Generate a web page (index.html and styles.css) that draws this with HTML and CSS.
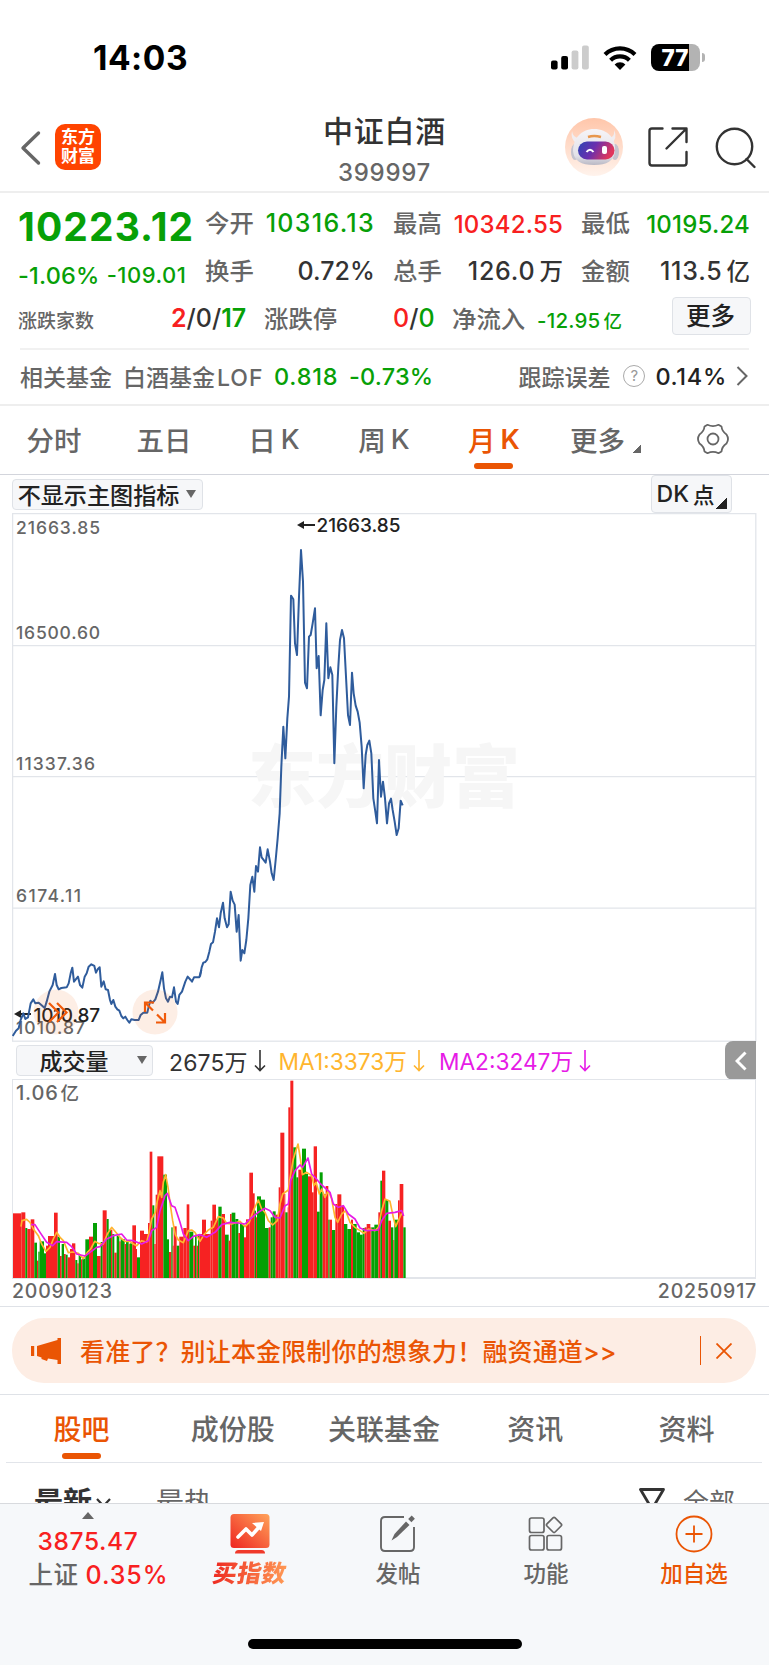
FILE: index.html
```
<!DOCTYPE html>
<html lang="zh-CN">
<head>
    <meta charset="UTF-8">
    <meta name="viewport" content="width=device-width, initial-scale=1.0">
    <title>中证白酒 399997</title>
    <link rel="stylesheet" href="styles.css">
</head>
<body>
    <div class="status-bar">
        <span class="time">14:03</span>
        <div class="status-icons">
            <svg class="signal" width="38" height="25" viewBox="0 0 38 25">
                <rect x="0" y="15.5" width="6.6" height="9" rx="2"/>
                <rect x="10.2" y="11" width="6.8" height="13.5" rx="2"/>
                <rect x="20.6" y="5.5" width="6.8" height="19" rx="2" fill="#ccc"/>
                <rect x="31" y="0.5" width="6.8" height="24" rx="2" fill="#ccc"/>
            </svg>
            <svg class="wifi" width="34" height="26" viewBox="0 0 34 26">
                <g fill="none" stroke="#000" stroke-width="4.2">
                    <path d="M2 9.5A21.5 21.5 0 0 1 32 9.5"/>
                    <path d="M7.6 15.2A13.4 13.4 0 0 1 26.4 15.2"/>
                </g>
                <path d="M17 25L11.6 19.4A7.6 7.6 0 0 1 22.4 19.4Z"/>
            </svg>
            <div class="battery"><span>77</span></div>
            <i class="battery-tip"></i>
        </div>
    </div>

    <header class="header">
        <div class="header-left">
            <svg width="22" height="36" viewBox="0 0 22 36" fill="none" stroke="#666" stroke-width="3.4" stroke-linecap="round"><path d="M18.5 3L3 18L18.5 33" stroke-linejoin="round"/></svg>
            <div class="logo"><span>东方</span><span>财富</span></div>
        </div>
        <div class="header-title">
            <h1>中证白酒</h1>
            <p>399997</p>
        </div>
        <div class="header-right">
            <svg width="58" height="58" viewBox="0 0 58 58">
                <defs>
                    <linearGradient id="halo" x1="0" y1="0" x2="0" y2="1"><stop offset="0" stop-color="#ffc6aa"/><stop offset="1" stop-color="#fff3ec"/></linearGradient>
                    <linearGradient id="face" x1="0" y1="0" x2="1" y2="0.3"><stop offset="0" stop-color="#2b46b5"/><stop offset="0.5" stop-color="#6a2fae"/><stop offset="1" stop-color="#e0365c"/></linearGradient>
                    <linearGradient id="shell" x1="0" y1="0" x2="0" y2="1"><stop offset="0" stop-color="#f6f4f7"/><stop offset="0.75" stop-color="#e2e1e8"/><stop offset="1" stop-color="#b9b8c4"/></linearGradient>
                </defs>
                <circle cx="29" cy="29" r="29" fill="url(#halo)"/>
                <path d="M7 13Q8 20 14 20L12 26Q5 21 7 13ZM49 12Q50 20 43 20L46 26Q53 20 49 12Z" fill="#f1edf0"/>
                <ellipse cx="10" cy="34" rx="4" ry="8" fill="#c5c3ce"/>
                <ellipse cx="50" cy="34" rx="4" ry="8" fill="#c5c3ce"/>
                <path d="M29 11C43 11 51 21 50 33C49 43 42 47 29 47C16 47 9 43 8 33C8 21 16 11 29 11Z" fill="url(#shell)"/>
                <rect x="13" y="23.5" width="36.5" height="18" rx="9" fill="url(#face)"/>
                <path d="M23 19Q29 17 36 19" stroke="#e8974d" stroke-width="2.4" fill="none"/>
                <path d="M21.5 34Q25 29.5 28.5 34" stroke="#fff" stroke-width="2" fill="none"/>
                <rect x="37" y="28" width="5" height="8" rx="2" fill="#fff"/>
            </svg>
            <svg class="share" width="40" height="40" viewBox="0 0 40 40" fill="none" stroke="#333" stroke-width="2.4" stroke-linecap="round" stroke-linejoin="round">
                <path d="M14.5 1.5H4Q1.5 1.5 1.5 4V36Q1.5 38.5 4 38.5H36Q38.5 38.5 38.5 36V25"/>
                <path d="M24.5 1.5H38.5V15M38 2L18.5 21.5"/>
            </svg>
            <svg class="search" width="42" height="42" viewBox="0 0 42 42" fill="none" stroke="#333" stroke-width="2.4" stroke-linecap="round">
                <circle cx="19.5" cy="19.5" r="17.7"/><path d="M31.5 32L39.5 40"/>
            </svg>
        </div>
    </header>

    <section class="quote">
        <div class="quote-main">
            <div class="price-block">
                <div class="price down">10223.12</div>
                <div class="change down"><span>-1.06%</span><span class="change-value">-109.01</span></div>
            </div>
            <dl class="quote-grid">
                <div><dt>今开</dt><dd class="down open">10316.13</dd></div>
                <div><dt>最高</dt><dd class="up sm">10342.55</dd></div>
                <div><dt>最低</dt><dd class="down sm">10195.24</dd></div>
                <div><dt>换手</dt><dd>0.72%</dd></div>
                <div><dt>总手</dt><dd class="wide">126.0<small>万</small></dd></div>
                <div><dt>金额</dt><dd class="wide">113.5<small>亿</small></dd></div>
            </dl>
        </div>
        <div class="quote-extra">
            <span class="label-sm">涨跌家数</span>
            <span class="counts"><b class="up">2</b>/0/<b class="down">17</b></span>
            <span class="label limit">涨跌停</span>
            <span class="limit-value"><b class="up">0</b>/<b class="down">0</b></span>
            <span class="label inflow">净流入</span>
            <span class="inflow-value down">-12.95<small>亿</small></span>
            <button class="more-btn">更多</button>
        </div>
        <div class="fund-row">
            <span class="fund-label">相关基金</span>
            <span class="fund-name">白酒基金<em>LOF</em></span>
            <span class="fund-price down">0.818</span>
            <span class="fund-change down">-0.73%</span>
            <span class="track">跟踪误差</span>
            <span class="help">?</span>
            <span class="track-value">0.14%</span>
            <svg width="12" height="20" viewBox="0 0 12 20" fill="none" stroke="#666" stroke-width="2"><path d="M1.5 1L10.5 10L1.5 19"/></svg>
        </div>
    </section>

    <nav class="period-tabs">
        <a>分时</a>
        <a>五日</a>
        <a>日<i>K</i></a>
        <a>周<i>K</i></a>
        <a class="active">月<i>K</i></a>
        <a class="more-tab">更多<span class="corner"></span></a>
        <a>
            <svg width="32" height="32" viewBox="0 0 32 32" fill="none" stroke="#666" stroke-width="1.8" stroke-linejoin="round">
                <path d="M10.500 1.800Q16 4.500 21.500 1.800L24.500 3.500Q25 8.500 29.500 11.500Q32.500 16 29.500 20.500Q25 23.500 24.500 28.500L21.500 30.200Q16 27.500 10.500 30.200L7.500 28.500Q7 23.500 2.500 20.500Q-0.500 16 2.500 11.500Q7 8.500 7.500 3.500Z"/>
                <circle cx="16" cy="16" r="5.5"/>
            </svg>
        </a>
    </nav>

    <div class="chart-toolbar">
        <button class="indicator">不显示主图指标<i class="caret"></i></button>
        <button class="dk">DK<span>点</span><i class="corner-dark"></i></button>
    </div>

    <svg class="price-chart" width="745" height="529" viewBox="12 513 745 529">
        <g stroke="#e2e5ea" stroke-width="1.3" fill="none">
            <rect x="12.6" y="513.6" width="743.2" height="527.6"/>
            <path d="M12 645.7H756M12 776.7H756M12 908.2H756"/>
        </g>
        <text class="watermark" x="248" y="802" textLength="272">东方财富</text>
        <g class="axis">
            <text x="16" y="534" textLength="84">21663.85</text>
            <text x="16" y="638.5" textLength="84">16500.60</text>
            <text x="16" y="770" textLength="79">11337.36</text>
            <text x="16" y="902" textLength="65">6174.11</text>
            <text x="16" y="1034" textLength="69">1010.87</text>
        </g>
        <g class="mark">
            <text x="316.5" y="532" textLength="84">21663.85</text>
            <text x="33.5" y="1021.5" textLength="66.5">1010.87</text>
            <path d="M302 525H315M18 1014H31" stroke="#222" stroke-width="1.8"/>
            <path d="M297 525L304 521V529ZM14 1014L21 1010V1018Z" fill="#222"/>
        </g>
        <g transform="scale(0.33333)" fill="none" stroke="#2f5c9c" stroke-width="6" stroke-linejoin="round">
            <polyline transform="translate(0 2700)" points="38,408 48,392 56,385 62,360 70,340 76,357 84,352 92,310 100,298 106,310 116,308 124,315 134,324 140,305 148,275 158,255 165,222 170,255 176,268 184,264 200,262 206,250 212,220 217,203 222,245 234,230 240,255 247,263 254,230 260,220 266,200 274,193 283,198 288,218 293,208 299,202 304,260 311,244 317,268 324,270 330,300 334,312 340,300 346,320 352,328 358,332 364,348 370,355 376,350 382,360 388,368 394,358 404,360 416,360 422,345 430,338 442,338 446,320 451,302 458,308 466,298 474,275 482,240 487,217 492,265 498,295 504,305 510,290 516,292 522,262 528,305 533,312 538,285 546,275 556,245 563,230 572,240 576,245 582,232 598,232 604,210"/>
            <polyline transform="translate(600 1590)" points="0,1340 5,1312 10,1298 16,1296 22,1288 28,1265 33,1242 39,1237 45,1205 51,1165 57,1192 62,1150 69,1118 74,1165 81,1192 86,1183 92,1085 98,1112 104,1124 110,1205 116,1155 122,1292 127,1260 133,1270 139,1230 145,1165 151,1065 157,1040 163,1085 168,1008 174,1025 180,952 185,982 197,998 203,958 210,995 215,1030 221,1050 227,990 233,925 239,850 244,710 250,590 256,685 262,565 267,500 273,197 280,208 285,340 291,375 297,200 303,60 309,155 315,458 321,475 327,320 332,315 338,280 345,235 350,415 356,378 362,556 368,480 373,450 379,280 385,445 391,412 397,435 403,700 409,530 415,410 420,330 426,300 432,325 438,440 444,555 450,585 456,428 461,490 467,527 473,545 479,578 485,650 491,775 497,675 502,645 508,632 514,670 520,805 526,845 531,880 537,690 543,800 549,755 555,805 561,880 567,820 573,806 578,840 584,875 590,915 596,895 602,812 608,826"/>
        </g>
        <g fill="#ea5504" fill-opacity="0.1">
            <circle cx="56" cy="1012" r="22.5"/>
            <circle cx="155" cy="1012" r="22.5"/>
        </g>
        <g fill="none" stroke="#f05a0a" stroke-width="2.2">
            <path d="M49 1003L58.500 1012.500L49 1022M57 1003L66.500 1012.500L57 1022"/>
            <path d="M145 1012V1002.500H154M145 1002.500L153 1010.500M165 1013V1022.500H156M165 1022.500L157 1014.500"/>
        </g>
    </svg>

    <div class="volume-header">
        <button class="volume-select"><span>成交量</span><i class="caret"></i></button>
        <span class="vol">2675万</span>
        <svg class="arrow" width="12" height="24" viewBox="0 0 12 24"><path d="M6 1V21M1 16.500L6 21.500L11 16.500"/></svg>
        <span class="ma1">MA1:3373万</span>
        <svg class="arrow ma1-arrow" width="12" height="24" viewBox="0 0 12 24"><path d="M6 1V21M1 16.500L6 21.500L11 16.500"/></svg>
        <span class="ma2">MA2:3247万</span>
        <svg class="arrow ma2-arrow" width="12" height="24" viewBox="0 0 12 24"><path d="M6 1V21M1 16.500L6 21.500L11 16.500"/></svg>
        <div class="collapse">
            <svg width="12" height="20" viewBox="0 0 12 20" fill="none" stroke="#fff" stroke-width="3"><path d="M10.500 1.500L2 10L10.500 18.500"/></svg>
        </div>
    </div>

    <div class="volume-chart">
        <svg width="744" height="198" viewBox="39 148 2232 594">
            <g id="bars"></g>
            <polyline fill="none" stroke="#ffb52e" stroke-width="5" stroke-linejoin="round" points="63,588 66,570 80,566 90,575 100,595 115,615 125,640 138,662 150,650 160,625 170,605 180,620 190,630 205,666 220,664 235,668 250,684 262,665 272,655 284,632 295,638 310,640 322,610 335,590 350,608 362,622 375,632 390,632 400,640 410,645 425,630 440,635 447,605 455,565 466,545 472,510 480,480 485,500 490,455 497,432 504,470 512,530 518,570 526,612 535,628 550,636 565,600 575,598 585,605 600,632 612,612 625,598 640,590 655,558 670,562 680,578 695,580 720,572 735,588 748,575 760,540 775,508 785,535 795,545 805,570 818,583 832,570 840,520 848,490 865,478 872,430 880,385 894,340 902,390 907,432 920,425 935,435 942,465 948,455 958,490 965,475 975,500 985,480 995,505 1005,560 1013,575 1025,550 1037,540 1050,575 1065,590 1080,600 1092,608 1105,595 1125,600 1135,590 1145,540 1155,505 1170,512 1180,560 1187,588 1195,570 1205,548"/>
            <polyline fill="none" stroke="#e61be6" stroke-width="5" stroke-linejoin="round" points="93,582 105,582 120,605 140,635 158,645 170,633 200,635 215,648 230,670 255,676 270,665 290,650 300,648 320,625 340,615 365,610 380,628 400,630 425,640 445,630 455,600 470,590 480,540 495,495 502,488 515,525 525,530 540,575 550,610 565,630 580,617 600,612 620,620 645,605 665,582 690,575 715,577 735,580 750,565 775,545 795,533 810,540 825,560 840,562 855,525 865,520 872,450 885,420 900,403 908,410 924,382 935,430 945,440 960,458 990,485 1000,520 1015,530 1030,525 1045,550 1065,565 1080,592 1100,600 1135,598 1145,570 1160,548 1185,545 1205,540 1211,556"/>
        </svg>
        <span class="volume-max">1.06<small>亿</small></span>
    </div>
    <div class="dates"><span>20090123</span><span>20250917</span></div>

    <div class="banner">
        <svg width="31" height="26" viewBox="0 0 31 26" fill="#ea5504"><path d="M0 8H3.200V18H0ZM6 8L26.500 2V0H30V26H26.500V22L17 20.500L16 23L10.500 21V19.500L6 18Z"/></svg>
        <p>看准了？别让本金限制你的想象力！融资通道&gt;&gt;</p>
        <i class="banner-line"></i>
        <svg width="16" height="16" viewBox="0 0 16 16" stroke="#ea5504" stroke-width="1.8"><path d="M0.500 0.500L15.500 15.500M15.500 0.500L0.500 15.500"/></svg>
    </div>

    <nav class="section-tabs">
        <a class="active">股吧</a>
        <a>成份股</a>
        <a>关联基金</a>
        <a>资讯</a>
        <a>资料</a>
    </nav>

    <div class="sort-row">
        <b>最新</b>
        <svg width="15" height="10" viewBox="0 0 15 10" fill="none" stroke="#333" stroke-width="2.2"><path d="M1 1L7.500 8L14 1"/></svg>
        <span class="hot">最热</span>
        <svg class="filter" width="26" height="28" viewBox="0 0 26 28" fill="none" stroke="#333" stroke-width="2.8" stroke-linejoin="round"><path d="M1.500 1.500H24.500L16 16V26H10V16Z"/></svg>
        <span class="all">全部</span>
    </div>

    <footer class="footer">
        <div class="footer-items">
            <div class="index-cell">
                <i class="tri-up"></i>
                <div class="index-price up">3875.47</div>
                <div class="index-name">上证 <span class="up">0.35%</span></div>
            </div>
            <div class="footer-item buy">
                <svg width="40" height="40" viewBox="0 0 40 40">
                    <defs><linearGradient id="buy" x1="0" y1="1" x2="1" y2="0"><stop offset="0" stop-color="#ee2420"/><stop offset="1" stop-color="#ffa35a"/></linearGradient></defs>
                    <rect x="0.5" y="0" width="39" height="34" rx="3.5" fill="url(#buy)"/>
                    <path d="M8.500 36H31.500Q35 36 35 39.500H5Q5 36 8.500 36Z" fill="#f0392a"/>
                    <path d="M8 23L16 15L22 21L30 12" fill="none" stroke="#fff" stroke-width="3.6" stroke-linecap="round" stroke-linejoin="round"/>
                    <path d="M22 9L34 8L31 17Z" fill="#fff"/>
                </svg>
                <span>买指数</span>
            </div>
            <div class="footer-item">
                <svg width="38" height="40" viewBox="0 0 38 40" fill="none" stroke="#666" stroke-width="1.9">
                    <path d="M25 3H6Q2 3 2 7V33Q2 37 6 37H31Q35 37 35 33V13"/>
                    <path d="M30.800 6.700L34.300 3.200" stroke-width="4.500"/>
                    <path d="M27 7.500L30.500 11L18 23L12.500 26.500L15.500 20Z" fill="#666" stroke="none"/>
                </svg>
                <span>发帖</span>
            </div>
            <div class="footer-item">
                <svg width="36" height="40" viewBox="0 0 36 40" fill="none" stroke="#666" stroke-width="1.7">
                    <rect x="1.5" y="4" width="14.5" height="14.5" rx="2"/>
                    <rect x="1.5" y="21.5" width="14.5" height="14.5" rx="2"/>
                    <rect x="19" y="21.5" width="14.5" height="14.5" rx="2"/>
                    <rect x="20.3" y="5.2" width="11.5" height="11.5" rx="1.5" transform="rotate(45 26.050 10.950)"/>
                </svg>
                <span>功能</span>
            </div>
            <div class="footer-item add">
                <svg width="38" height="40" viewBox="0 0 38 40" fill="none" stroke="#ea5504" stroke-width="1.8">
                    <circle cx="19" cy="20" r="17.5"/><path d="M10.500 20H27.500M19 11.500V28.500"/>
                </svg>
                <span>加自选</span>
            </div>
        </div>
        <div class="home-indicator"></div>
    </footer>

    <script src="chart.js"></script>
</body>
</html>
```
FILE: styles.css
```
* {
    box-sizing: border-box;
}

body {
    margin: 0;
    height: 1665px;
    overflow: hidden;
    display: flex;
    flex-direction: column;
    background: #fff;
    color: #333;
    font-family: Inter, "Noto Sans CJK SC", sans-serif;
    font-weight: 500;
}

h1, p, dl, dd {
    margin: 0;
}

i, em {
    font-style: normal;
}

button {
    font-family: inherit;
    font-weight: 500;
    color: #222;
    background: #f6f7f9;
    border: 1.5px solid #dfe2e7;
    border-radius: 4px;
    padding: 0;
    display: flex;
    align-items: center;
    justify-content: center;
    white-space: nowrap;
}

svg {
    flex: none;
    display: block;
}

.up {
    color: #f82020;
}

.down {
    color: #07a007;
}

/* status bar */
.status-bar {
    height: 115px;
    padding: 0 64px 0 93px;
    display: flex;
    align-items: center;
    justify-content: space-between;
    color: #000;
}

.time {
    font-size: 33.5px;
    font-weight: 700;
    line-height: 40px;
    letter-spacing: 0.5px;
}

.status-icons {
    display: flex;
    align-items: center;
}

.wifi {
    margin-left: 14px;
}

.battery {
    width: 49px;
    height: 27px;
    margin-left: 14px;
    border-radius: 8px;
    background: linear-gradient(90deg, #000 38px, #b3b3b3 38px);
    color: #fff;
    font-size: 22.5px;
    font-weight: 800;
    line-height: 27px;
    text-align: center;
    padding-right: 1px;
}

.battery-tip {
    width: 3px;
    height: 9px;
    margin-left: 2px;
    border-radius: 0 3px 3px 0;
    background: #b3b3b3;
}

/* header */
.header {
    height: 78px;
    border-bottom: 2px solid #eee;
    display: grid;
    grid-template-columns: 1fr 200px 1fr;
}

.header-left {
    display: flex;
    padding: 9px 0 0 20px;
    gap: 13px;
}

.header-left > svg {
    margin-top: 6px;
}

.logo {
    width: 46px;
    height: 46px;
    border-radius: 10px;
    background: #ff4400;
    color: #fff;
    font-size: 17px;
    font-weight: 700;
    line-height: 19px;
    padding-top: 4px;
    display: flex;
    flex-direction: column;
    align-items: center;
}

.header-title {
    text-align: center;
}

.header-title h1 {
    font-size: 30px;
    font-weight: 500;
    line-height: 36px;
    letter-spacing: 0.8px;
    margin-top: -2px;
}

.header-title p {
    font-size: 24px;
    line-height: 28px;
    margin-top: 10px;
    letter-spacing: 0.7px;
    color: #666;
}

.header-right {
    display: flex;
    justify-content: flex-end;
    padding: 3px 12px 0 0;
}

.share {
    margin: 9px 0 0 25px;
}

.search {
    margin: 9px 0 0 27px;
}

/* quote */
.quote-main {
    display: flex;
    padding: 6px 20px 0 18px;
    height: 102px;
}

.price-block {
    width: 188px;
}

.price {
    font-size: 39px;
    font-weight: 700;
    line-height: 46px;
    margin-top: 5px;
    letter-spacing: 1.1px;
}

.change {
    display: flex;
    align-items: center;
    font-size: 23.5px;
    line-height: 28px;
    margin-top: 12px;
    letter-spacing: 0.2px;
}

.change-value {
    font-size: 22px;
    letter-spacing: 0.5px;
    margin: -2px 0 0 7px;
}

.quote-grid {
    flex: 1;
    display: grid;
    grid-template-columns: 168px 168px 167px;
    justify-content: space-between;
    grid-template-rows: 48px 48px;
}

.quote-grid div {
    display: flex;
    align-items: center;
    justify-content: space-between;
    line-height: 48px;
    white-space: nowrap;
}

dt, .label {
    color: #666;
    font-size: 24.4px;
}

dt {
    margin-left: -1px;
}

dd {
    font-size: 25px;
    letter-spacing: 0.1px;
}

.quote-grid dd {
    margin-right: -1px;
}

dd.open {
    letter-spacing: 1.3px;
}

dd.sm {
    font-size: 24px;
    padding-top: 3px;
    letter-spacing: 0.2px;
}

dd.wide {
    letter-spacing: 0.8px;
}

dd small {
    font-size: 23.5px;
    margin-left: 4px;
    letter-spacing: 0;
}

.quote-extra {
    display: flex;
    align-items: center;
    height: 55px;
    margin: 0 20px;
    padding-bottom: 8px;
    border-bottom: 2px solid #f1f1f1;
    white-space: nowrap;
}

.label-sm {
    width: 153px;
    font-size: 19px;
    color: #666;
    margin: 4px 0 0 -2px;
}

.quote-extra b {
    font-weight: 500;
}

.counts, .limit-value {
    font-size: 25px;
}

.quote-extra .counts b {
    font-weight: 600;
}

.counts {
    width: 93px;
}

.limit {
    width: 129px;
}

.limit-value {
    width: 59px;
}

.inflow {
    width: 85px;
}

.inflow-value {
    font-size: 20.5px;
    margin-top: 5px;
    letter-spacing: 0.2px;
}

.inflow-value small {
    font-size: 18.5px;
    margin-left: 3px;
}

.more-btn {
    width: 79px;
    height: 38px;
    margin: -4px -2px 0 auto;
    padding: 0 2px 2px 0;
    font-size: 24.5px;
}

.fund-row {
    display: flex;
    align-items: center;
    height: 56px;
    padding: 0 21px 2px 20px;
    border-bottom: 2px solid #eee;
    font-size: 23px;
    color: #666;
    white-space: nowrap;
}

.fund-label {
    width: 103px;
}

.fund-name {
    width: 151px;
}

.fund-name em {
    margin-left: 2px;
    letter-spacing: 1px;
}

.fund-price {
    width: 75px;
    font-size: 23.5px;
    letter-spacing: 0.8px;
}

.fund-change {
    font-size: 23.5px;
    letter-spacing: 0.2px;
}

.track {
    margin-left: auto;
}

.help {
    width: 22px;
    height: 22px;
    margin: 0 10px 0 13px;
    border: 1.5px solid #aaa;
    border-radius: 50%;
    font-size: 15px;
    font-weight: 400;
    line-height: 19px;
    text-align: center;
    color: #999;
}

.track-value {
    color: #222;
    font-size: 23.5px;
    letter-spacing: 0.7px;
    margin-right: 9px;
}

/* period tabs */
.period-tabs {
    display: grid;
    grid-template-columns: repeat(7, 110px);
    height: 69px;
    margin-left: -1px;
    border-bottom: 1.5px solid #d3d5dc;
}

.period-tabs a {
    position: relative;
    display: flex;
    align-items: center;
    justify-content: center;
    padding-bottom: 2px;
    font-size: 27.5px;
    color: #666;
}

.period-tabs i {
    margin-left: 5px;
}

.period-tabs .active i {
    font-weight: 600;
}

.period-tabs .more-tab {
    padding-right: 7px;
}

.period-tabs a:last-child {
    padding-right: 3px;
}

.active, .period-tabs a.active {
    color: #ea5504;
}

.active::after {
    content: "";
    position: absolute;
    left: calc(50% - 20px);
    bottom: 5px;
    width: 39px;
    height: 6px;
    border-radius: 3px;
    background: #ea5504;
}

.corner {
    width: 8px;
    height: 8px;
    margin: 20px -10px 0 8px;
    background: linear-gradient(135deg, transparent 50%, #666 50%);
}

/* chart */
.chart-toolbar {
    display: flex;
    justify-content: space-between;
    height: 38px;
    padding: 0 37px 0 12px;
}

.indicator {
    width: 191px;
    height: 31px;
    margin-top: 4px;
    padding: 0 1px 2px 0;
    font-size: 23.1px;
}

.caret {
    border: 5px solid transparent;
    border-top: 8px solid #666;
    border-bottom: 0;
    margin-left: 7px;
}

.dk {
    width: 81px;
    height: 38px;
    padding: 0 1px 1px 0;
    font-size: 23px;
}

.dk span {
    font-size: 21.5px;
    margin-left: 4px;
}

.corner-dark {
    width: 11px;
    height: 11px;
    margin: 20px -2px 0 2px;
    background: linear-gradient(135deg, transparent 50%, #222 50%);
}

.price-chart {
    margin-left: 12px;
}

.watermark {
    font-size: 68px;
    font-weight: 900;
    fill: #f6f6f6;
}

.axis {
    font-size: 17.5px;
    fill: #666;
}

.mark {
    font-size: 19px;
    fill: #222;
}

.volume-header {
    display: flex;
    align-items: center;
    height: 37px;
    margin: 0 13px 0 16px;
    font-size: 23px;
    font-weight: 400;
    white-space: nowrap;
}

.volume-select {
    width: 137px;
    height: 31px;
    margin-right: 16px;
    font-size: 23px;
    padding: 0 0 1px 17px;
}

.volume-select .caret {
    margin-left: 28px;
}

.arrow {
    fill: none;
    stroke: #333;
    stroke-width: 1.6;
    margin: 0 14px 0 6px;
}

.vol {
    letter-spacing: 0.1px;
}

.ma1, .ma2 {
    font-size: 22.7px;
}

.ma1 {
    color: #ffb52e;
    margin-left: -1px;
}

.ma1-arrow {
    stroke: #ffb52e;
}

.ma2 {
    color: #e61be6;
}

.ma2-arrow {
    stroke: #e61be6;
}

.collapse {
    width: 31px;
    height: 39px;
    margin-left: auto;
    border-radius: 8px 0 0 8px;
    background: #999;
    display: flex;
    align-items: center;
    justify-content: center;
}

.volume-chart {
    position: relative;
    height: 200px;
    margin: 0 13px 0 12px;
    border: 1px solid #e2e5ea;
    border-bottom-width: 2px;
}

.volume-max {
    position: absolute;
    left: 3px;
    top: 2px;
    font-size: 20px;
    line-height: 23px;
    letter-spacing: 0.8px;
    color: #666;
}

.volume-max small {
    font-size: 18.5px;
    margin-left: 2px;
}

.dates {
    display: flex;
    justify-content: space-between;
    height: 28px;
    padding: 0 12px;
    border-bottom: 1px solid #dfe2e7;
    font-size: 19.5px;
    line-height: 25px;
    letter-spacing: 0.8px;
    color: #666;
}

/* promo banner */
.banner {
    display: flex;
    align-items: center;
    height: 65px;
    margin: 11px 13px 11px 12px;
    padding: 0 24px 0 19px;
    border-radius: 32px;
    background: #fdede4;
    color: #ea5504;
    font-size: 25px;
    letter-spacing: 0.15px;
    white-space: nowrap;
}

.banner p {
    margin: -2px 0 0 18px;
}

.banner-line {
    width: 1.5px;
    height: 29px;
    margin: 0 15px 0 auto;
    background: #ea5504;
}

.section-tabs {
    display: grid;
    grid-template-columns: repeat(5, 1fr);
    height: 69px;
    padding: 0 7px 0 6px;
    border-top: 1px solid #dfe2e7;
    background: linear-gradient(#e2e5ea, #e2e5ea) 6px 100% / 756px 1px no-repeat;
}

.section-tabs a {
    position: relative;
    display: flex;
    align-items: center;
    justify-content: center;
    padding-bottom: 2px;
    font-size: 28px;
    color: #666;
}

.section-tabs .active {
    color: #ea5504;
}

.section-tabs .active::after {
    bottom: 4px;
}

.sort-row {
    display: flex;
    align-items: flex-start;
    height: 40px;
    padding: 20px 34px 0;
    overflow: hidden;
    font-size: 28px;
    font-weight: 400;
    line-height: 40px;
    color: #666;
}

.sort-row b {
    font-size: 29px;
    color: #333;
}

.sort-row > svg {
    margin: 15px 0 0 4px;
}

.hot {
    margin-left: 45px;
}

.sort-row > .filter {
    margin: 5px 0 0 auto;
}

.all {
    margin-left: 18px;
    font-size: 26px;
}

/* bottom bar */
.footer {
    flex: none;
    height: 162px;
    border-top: 1.5px solid #d8dade;
    background: #f6f8fa;
    display: flex;
    flex-direction: column;
    align-items: center;
}

.footer-items {
    display: grid;
    grid-template-columns: 176px repeat(4, 148px);
    width: 769px;
    height: 135px;
    flex: none;
}

.index-cell {
    display: flex;
    flex-direction: column;
    align-items: center;
    font-size: 24.5px;
    padding-top: 8px;
    white-space: nowrap;
}

.tri-up {
    border: 6.5px solid transparent;
    border-bottom: 7px solid #666;
    border-top: 0;
}

.index-price {
    line-height: 30px;
    margin-top: 7px;
    letter-spacing: 0.6px;
}

.index-name {
    line-height: 30px;
    margin: 4px 0 0 21px;
    color: #666;
    letter-spacing: 0.5px;
}

.index-name span {
    font-size: 25px;
    letter-spacing: 0.9px;
}

.footer-item {
    display: flex;
    flex-direction: column;
    align-items: center;
    padding-top: 10px;
    font-size: 22.5px;
    line-height: 30px;
    color: #666;
}

.footer-item span {
    margin-top: 5px;
}

.buy span {
    font-size: 24px;
    font-weight: 900;
    letter-spacing: 0.5px;
    transform: skewX(-10deg);
    color: transparent;
    background: linear-gradient(90deg, #ee2b22, #ff9a55);
    -webkit-background-clip: text;
    background-clip: text;
}

.add {
    color: #ea5504;
}

.home-indicator {
    width: 274px;
    height: 10px;
    border-radius: 5px;
    background: #000;
}
```
FILE: chart.js
```
// volume bars: left edge, top, r = up month, g = down month
const volume = `38 548 r,64 545 r,76 592 g,82 595 r,92 566 r,103 636 g,111 690 r,115 663 g,119 632 g,132 668 g,138 645 r,144 616 r,162 546 r,173 618 g,180 676 r,185 640 g,192 670 r,197 672 g,203 680 r,210 655 r,216 638 r,226 688 g,232 698 r,236 672 g,243 686 r,247 684 g,256 626 g,267 618 r,279 577 g,291 676 r,302 634 g,308 539 r,320 565 g,326 597 g,333 597 r,337 610 g,343 666 r,350 615 g,358 632 r,362 625 g,374 640 r,378 630 g,386 640 r,389 638 g,397 584 r,408 655 r,411 680 g,420 600 r,432 610 r,444 577 r,449 363 r,457 524 g,463 640 r,467 492 r,472 377 r,490 432 g,501 626 g,507 664 r,514 590 g,518 645 r,521 587 r,530 645 g,538 618 r,550 592 r,560 521 r,568 603 g,580 645 r,585 612 g,590 645 r,594 612 g,598 610 r,606 567 r,618 610 r,632 570 r,637 522 r,648 566 r,655 528 g,665 550 r,675 612 g,686 630 r,690 550 r,695 546 g,706 565 g,715 607 r,720 580 g,732 620 r,738 566 r,748 426 r,759 488 r,764 540 g,768 560 r,771 497 g,783 507 g,795 592 g,806 590 r,812 560 g,818 542 g,827 552 r,836 470 r,841 306 r,853 490 r,856 545 g,863 530 r,865 230 r,871 150 r,880 350 g,889 440 g,895 417 r,906 354 g,918 430 g,924 437 r,936 485 r,941 347 r,951 543 g,959 425 g,968 490 r,977 466 r,985 567 g,989 567 r,996 598 g,1006 520 r,1012 491 r,1024 525 r,1032 580 g,1042 595 g,1053 567 r,1059 580 g,1070 605 g,1080 612 g,1088 592 g,1094 590 r,1100 580 r,1111 590 r,1114 590 g,1123 582 g,1135 545 r,1141 450 g,1146 420 r,1156 508 g,1165 570 r,1173 590 g,1180 628 r,1183 567 g,1194 509 r,1199 460 r,1210 590 g`;
const BASE = 742;
const END = 1217;

const bars = volume.split(",").map((item) => {
    const [x, top, dir] = item.split(" ");
    return { x: Number(x), top: Number(top), color: dir === "r" ? "#f62222" : "#04a004" };
});

bars.forEach((bar, i) => {
    const next = i + 1 < bars.length ? bars[i + 1].x : END;
    const rect = document.createElementNS("http://www.w3.org/2000/svg", "rect");
    rect.setAttribute("x", bar.x);
    rect.setAttribute("y", bar.top);
    rect.setAttribute("width", next - bar.x);
    rect.setAttribute("height", BASE - bar.top);
    rect.setAttribute("fill", bar.color);
    document.getElementById("bars").appendChild(rect);
});
```
